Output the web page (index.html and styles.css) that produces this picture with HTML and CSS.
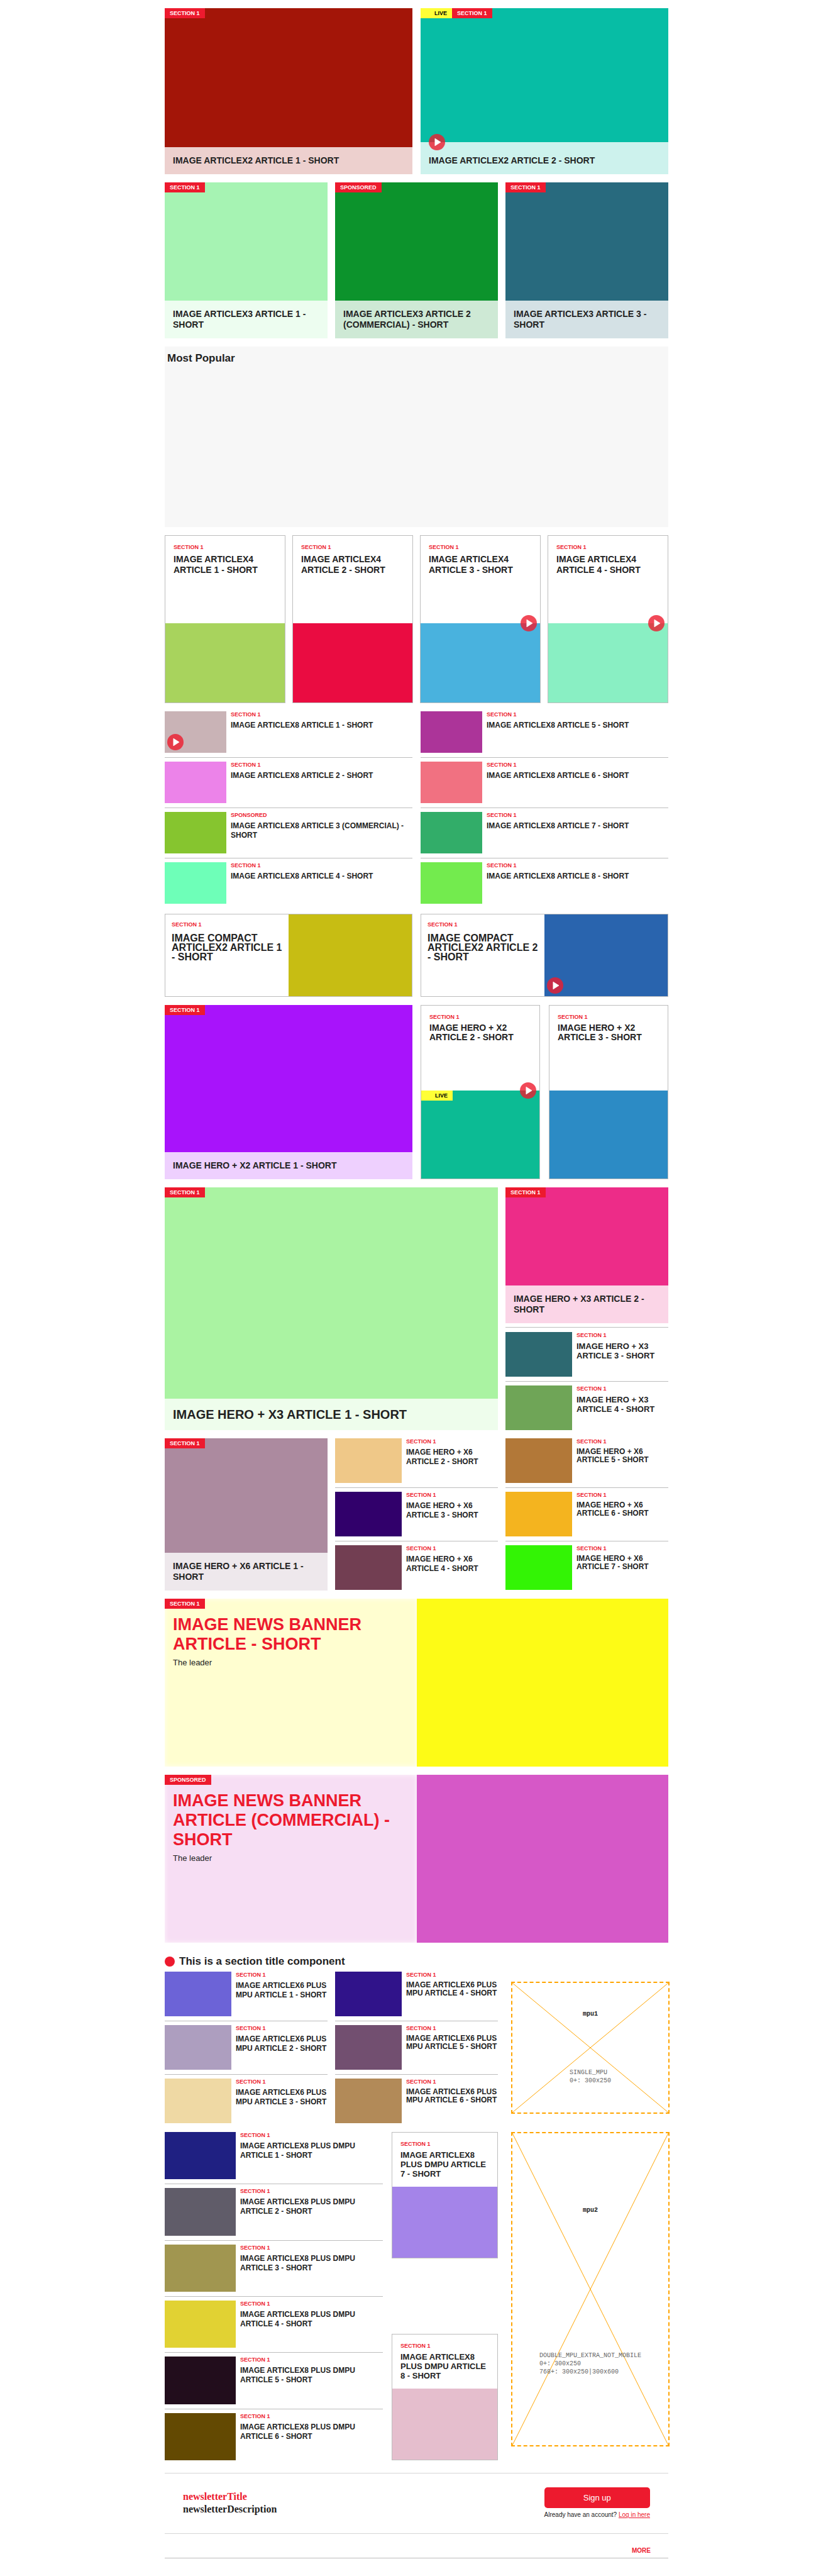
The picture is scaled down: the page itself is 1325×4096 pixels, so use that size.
FILE: index.html
```html
<!DOCTYPE html>
<html lang="en">
<head>
<meta charset="utf-8">
<meta name="viewport" content="width=device-width, initial-scale=1">
<title>Section front</title>
<link rel="stylesheet" href="styles.css">
</head>
<body>
<svg class="sprite" aria-hidden="true">
  <symbol id="play" viewBox="0 0 32 32">
    <circle cx="16" cy="16" r="16" fill="#ed1c2e" fill-opacity=".8"/>
    <path d="M12.2 9v14.2L23.3 16z" fill="#fff" stroke="#fff" stroke-width="1" stroke-linejoin="round"/>
  </symbol>
</svg>
<main class="page">

  <section class="grid cols-2">
    <article class="poster poster-wide t-a1">
      <div class="picture"></div>
      <div class="badges"><span class="badge">SECTION 1</span></div>
      <div class="caption"><h3 class="title">IMAGE ARTICLEX2 ARTICLE 1 - SHORT</h3></div>
    </article>
    <article class="poster poster-wide t-a2">
      <div class="picture"></div>
      <div class="badges"><span class="badge live">LIVE</span><span class="badge">SECTION 1</span></div>
      <div class="caption caption-play"><svg class="play play-caption"><use href="#play"/></svg><h3 class="title">IMAGE ARTICLEX2 ARTICLE 2 - SHORT</h3></div>
    </article>
  </section>

  <section class="grid cols-3">
    <article class="poster poster-third t-b1">
      <div class="picture"></div>
      <div class="badges"><span class="badge">SECTION 1</span></div>
      <div class="caption caption-two"><h3 class="title">IMAGE ARTICLEX3 ARTICLE 1 - SHORT</h3></div>
    </article>
    <article class="poster poster-third t-b2">
      <div class="picture"></div>
      <div class="badges"><span class="badge">SPONSORED</span></div>
      <div class="caption caption-two"><h3 class="title">IMAGE ARTICLEX3 ARTICLE 2 (COMMERCIAL) - SHORT</h3></div>
    </article>
    <article class="poster poster-third t-b3">
      <div class="picture"></div>
      <div class="badges"><span class="badge">SECTION 1</span></div>
      <div class="caption caption-two"><h3 class="title">IMAGE ARTICLEX3 ARTICLE 3 - SHORT</h3></div>
    </article>
  </section>

  <section class="popular"><h2 class="heading">Most Popular</h2></section>

  <section class="grid cols-4">
    <article class="card card-quarter t-c1">
      <div class="card-body"><p class="tag">SECTION 1</p><h3 class="title">IMAGE ARTICLEX4 ARTICLE 1 - SHORT</h3></div>
      <div class="picture"></div>
    </article>
    <article class="card card-quarter t-c2">
      <div class="card-body"><p class="tag">SECTION 1</p><h3 class="title">IMAGE ARTICLEX4 ARTICLE 2 - SHORT</h3></div>
      <div class="picture"></div>
    </article>
    <article class="card card-quarter t-c3">
      <div class="card-body"><p class="tag">SECTION 1</p><h3 class="title">IMAGE ARTICLEX4 ARTICLE 3 - SHORT</h3></div>
      <div class="picture"><svg class="play play-edge"><use href="#play"/></svg></div>
    </article>
    <article class="card card-quarter t-c4">
      <div class="card-body"><p class="tag">SECTION 1</p><h3 class="title">IMAGE ARTICLEX4 ARTICLE 4 - SHORT</h3></div>
      <div class="picture"><svg class="play play-edge"><use href="#play"/></svg></div>
    </article>
  </section>

  <section class="grid cols-2 x8">
    <div class="list list-x8">
      <article class="item t-d1"><div class="picture"><svg class="play play-corner"><use href="#play"/></svg></div><div class="item-body"><p class="tag">SECTION 1</p><h3 class="title">IMAGE ARTICLEX8 ARTICLE 1 - SHORT</h3></div></article>
      <article class="item t-d2"><div class="picture"></div><div class="item-body"><p class="tag">SECTION 1</p><h3 class="title">IMAGE ARTICLEX8 ARTICLE 2 - SHORT</h3></div></article>
      <article class="item t-d3"><div class="picture"></div><div class="item-body"><p class="tag">SPONSORED</p><h3 class="title">IMAGE ARTICLEX8 ARTICLE 3 (COMMERCIAL) - SHORT</h3></div></article>
      <article class="item t-d4"><div class="picture"></div><div class="item-body"><p class="tag">SECTION 1</p><h3 class="title">IMAGE ARTICLEX8 ARTICLE 4 - SHORT</h3></div></article>
    </div>
    <div class="list list-x8">
      <article class="item t-d5"><div class="picture"></div><div class="item-body"><p class="tag">SECTION 1</p><h3 class="title">IMAGE ARTICLEX8 ARTICLE 5 - SHORT</h3></div></article>
      <article class="item t-d6"><div class="picture"></div><div class="item-body"><p class="tag">SECTION 1</p><h3 class="title">IMAGE ARTICLEX8 ARTICLE 6 - SHORT</h3></div></article>
      <article class="item t-d7"><div class="picture"></div><div class="item-body"><p class="tag">SECTION 1</p><h3 class="title">IMAGE ARTICLEX8 ARTICLE 7 - SHORT</h3></div></article>
      <article class="item t-d8"><div class="picture"></div><div class="item-body"><p class="tag">SECTION 1</p><h3 class="title">IMAGE ARTICLEX8 ARTICLE 8 - SHORT</h3></div></article>
    </div>
  </section>

  <section class="grid cols-2">
    <article class="compact t-e1">
      <div class="compact-body"><p class="tag">SECTION 1</p><h3 class="title">IMAGE COMPACT ARTICLEX2 ARTICLE 1 - SHORT</h3></div>
      <div class="picture"></div>
    </article>
    <article class="compact t-e2">
      <div class="compact-body"><p class="tag">SECTION 1</p><h3 class="title">IMAGE COMPACT ARTICLEX2 ARTICLE 2 - SHORT</h3></div>
      <div class="picture"><svg class="play play-corner"><use href="#play"/></svg></div>
    </article>
  </section>

  <section class="grid cols-2">
    <article class="poster t-f1">
      <div class="picture"></div>
      <div class="badges"><span class="badge">SECTION 1</span></div>
      <div class="caption"><h3 class="title">IMAGE HERO + X2 ARTICLE 1 - SHORT</h3></div>
    </article>
    <div class="grid pair">
      <article class="card card-hero t-f2">
        <div class="card-body"><p class="tag">SECTION 1</p><h3 class="title">IMAGE HERO + X2 ARTICLE 2 - SHORT</h3></div>
        <div class="picture"><div class="badges"><span class="badge live">LIVE</span></div><svg class="play play-edge"><use href="#play"/></svg></div>
      </article>
      <article class="card card-hero t-f3">
        <div class="card-body"><p class="tag">SECTION 1</p><h3 class="title">IMAGE HERO + X2 ARTICLE 3 - SHORT</h3></div>
        <div class="picture"></div>
      </article>
    </div>
  </section>

  <section class="grid cols-3">
    <article class="poster poster-hero span-2 t-g1">
      <div class="picture"></div>
      <div class="badges"><span class="badge">SECTION 1</span></div>
      <div class="caption"><h3 class="title">IMAGE HERO + X3 ARTICLE 1 - SHORT</h3></div>
    </article>
    <div class="side">
      <article class="poster poster-side t-g2">
        <div class="picture"></div>
        <div class="badges"><span class="badge">SECTION 1</span></div>
        <div class="caption caption-side"><h3 class="title">IMAGE HERO + X3 ARTICLE 2 - SHORT</h3></div>
      </article>
      <div class="list list-x3">
        <article class="item t-g3"><div class="picture"></div><div class="item-body"><p class="tag">SECTION 1</p><h3 class="title">IMAGE HERO + X3 ARTICLE 3 - SHORT</h3></div></article>
        <article class="item t-g4"><div class="picture"></div><div class="item-body"><p class="tag">SECTION 1</p><h3 class="title">IMAGE HERO + X3 ARTICLE 4 - SHORT</h3></div></article>
      </div>
    </div>
  </section>

  <section class="grid cols-3 x6">
    <article class="poster t-h1">
      <div class="picture"></div>
      <div class="badges"><span class="badge">SECTION 1</span></div>
      <div class="caption caption-two"><h3 class="title">IMAGE HERO + X6 ARTICLE 1 - SHORT</h3></div>
    </article>
    <div class="list">
      <article class="item t-h2"><div class="picture"></div><div class="item-body"><p class="tag">SECTION 1</p><h3 class="title">IMAGE HERO + X6 ARTICLE 2 - SHORT</h3></div></article>
      <article class="item t-h3"><div class="picture"></div><div class="item-body"><p class="tag">SECTION 1</p><h3 class="title">IMAGE HERO + X6 ARTICLE 3 - SHORT</h3></div></article>
      <article class="item t-h4"><div class="picture"></div><div class="item-body"><p class="tag">SECTION 1</p><h3 class="title">IMAGE HERO + X6 ARTICLE 4 - SHORT</h3></div></article>
    </div>
    <div class="list list-tight">
      <article class="item t-h5"><div class="picture"></div><div class="item-body"><p class="tag">SECTION 1</p><h3 class="title">IMAGE HERO + X6 ARTICLE 5 - SHORT</h3></div></article>
      <article class="item t-h6"><div class="picture"></div><div class="item-body"><p class="tag">SECTION 1</p><h3 class="title">IMAGE HERO + X6 ARTICLE 6 - SHORT</h3></div></article>
      <article class="item t-h7"><div class="picture"></div><div class="item-body"><p class="tag">SECTION 1</p><h3 class="title">IMAGE HERO + X6 ARTICLE 7 - SHORT</h3></div></article>
    </div>
  </section>

  <article class="banner t-i1">
    <div class="banner-body"><h2 class="banner-title">IMAGE NEWS BANNER ARTICLE - SHORT</h2><p class="leader">The leader</p></div>
    <div class="picture"></div>
    <div class="badges"><span class="badge">SECTION 1</span></div>
  </article>

  <article class="banner t-i2">
    <div class="banner-body"><h2 class="banner-title">IMAGE NEWS BANNER ARTICLE (COMMERCIAL) - SHORT</h2><p class="leader">The leader</p></div>
    <div class="picture"></div>
    <div class="badges"><span class="badge">SPONSORED</span></div>
  </article>

  <section>
    <h2 class="heading section-title"><span class="dot"></span>This is a section title component</h2>
    <div class="grid cols-3 x6">
      <div class="list">
        <article class="item t-j1"><div class="picture"></div><div class="item-body"><p class="tag">SECTION 1</p><h3 class="title">IMAGE ARTICLEX6 PLUS MPU ARTICLE 1 - SHORT</h3></div></article>
        <article class="item t-j2"><div class="picture"></div><div class="item-body"><p class="tag">SECTION 1</p><h3 class="title">IMAGE ARTICLEX6 PLUS MPU ARTICLE 2 - SHORT</h3></div></article>
        <article class="item t-j3"><div class="picture"></div><div class="item-body"><p class="tag">SECTION 1</p><h3 class="title">IMAGE ARTICLEX6 PLUS MPU ARTICLE 3 - SHORT</h3></div></article>
      </div>
      <div class="list list-tight">
        <article class="item t-j4"><div class="picture"></div><div class="item-body"><p class="tag">SECTION 1</p><h3 class="title">IMAGE ARTICLEX6 PLUS MPU ARTICLE 4 - SHORT</h3></div></article>
        <article class="item t-j5"><div class="picture"></div><div class="item-body"><p class="tag">SECTION 1</p><h3 class="title">IMAGE ARTICLEX6 PLUS MPU ARTICLE 5 - SHORT</h3></div></article>
        <article class="item t-j6"><div class="picture"></div><div class="item-body"><p class="tag">SECTION 1</p><h3 class="title">IMAGE ARTICLEX6 PLUS MPU ARTICLE 6 - SHORT</h3></div></article>
      </div>
      <aside class="mpu mpu-single">
        <svg class="cross" viewBox="0 0 100 100" preserveAspectRatio="none" aria-hidden="true"><path d="M0 0L100 100M100 0L0 100"/></svg>
        <strong class="mpu-name">mpu1</strong>
        <p class="mpu-sizes">SINGLE_MPU<br>0+: 300x250</p>
      </aside>
    </div>
  </section>

  <section class="grid cols-3 dmpu">
    <div class="grid dmpu-main span-2">
      <div class="list list-dmpu">
        <article class="item t-k1"><div class="picture"></div><div class="item-body"><p class="tag">SECTION 1</p><h3 class="title">IMAGE ARTICLEX8 PLUS DMPU ARTICLE 1 - SHORT</h3></div></article>
        <article class="item t-k2"><div class="picture"></div><div class="item-body"><p class="tag">SECTION 1</p><h3 class="title">IMAGE ARTICLEX8 PLUS DMPU ARTICLE 2 - SHORT</h3></div></article>
        <article class="item t-k3"><div class="picture"></div><div class="item-body"><p class="tag">SECTION 1</p><h3 class="title">IMAGE ARTICLEX8 PLUS DMPU ARTICLE 3 - SHORT</h3></div></article>
        <article class="item t-k4"><div class="picture"></div><div class="item-body"><p class="tag">SECTION 1</p><h3 class="title">IMAGE ARTICLEX8 PLUS DMPU ARTICLE 4 - SHORT</h3></div></article>
        <article class="item t-k5"><div class="picture"></div><div class="item-body"><p class="tag">SECTION 1</p><h3 class="title">IMAGE ARTICLEX8 PLUS DMPU ARTICLE 5 - SHORT</h3></div></article>
        <article class="item t-k6"><div class="picture"></div><div class="item-body"><p class="tag">SECTION 1</p><h3 class="title">IMAGE ARTICLEX8 PLUS DMPU ARTICLE 6 - SHORT</h3></div></article>
      </div>
      <div class="stack">
        <article class="card card-dmpu t-k7">
          <div class="card-body"><p class="tag">SECTION 1</p><h3 class="title">IMAGE ARTICLEX8 PLUS DMPU ARTICLE 7 - SHORT</h3></div>
          <div class="picture"></div>
        </article>
        <article class="card card-dmpu t-k8">
          <div class="card-body"><p class="tag">SECTION 1</p><h3 class="title">IMAGE ARTICLEX8 PLUS DMPU ARTICLE 8 - SHORT</h3></div>
          <div class="picture"></div>
        </article>
      </div>
    </div>
    <aside class="mpu mpu-double">
      <svg class="cross" viewBox="0 0 100 100" preserveAspectRatio="none" aria-hidden="true"><path d="M0 0L100 100M100 0L0 100"/></svg>
      <strong class="mpu-name">mpu2</strong>
      <p class="mpu-sizes">DOUBLE_MPU_EXTRA_NOT_MOBILE<br>0+: 300x250<br>768+: 300x250|300x600</p>
    </aside>
  </section>

  <footer class="footer">
    <section class="newsletter">
      <div>
        <h2 class="newsletter-title">newsletterTitle</h2>
        <p class="newsletter-text">newsletterDescription</p>
      </div>
      <div class="signup">
        <button class="signup-button" type="button">Sign up</button>
        <p class="signup-note">Already have an account? <a class="login" href="#">Log in here</a></p>
      </div>
    </section>
    <div class="more-bar"><a class="more" href="#">MORE</a></div>
  </footer>
</main>
</body>
</html>
```
FILE: styles.css
```css
:root {
  --red: #ed1a2e;
  --ink: #222;
  --line: #bdbdbd;
}

* { box-sizing: border-box; }

body {
  margin: 0;
  background: #fff;
  color: var(--ink);
  font-family: "Liberation Sans", Arial, sans-serif;
}

h2, h3, p { margin: 0; }

.sprite { display: none; }

.page {
  display: flex;
  flex-direction: column;
  gap: 13px;
  max-width: 801px;
  margin: 0 auto;
  padding: 13px 0 27px;
}

/* Grids */
.grid { display: grid; gap: 13px; }
.cols-2 { grid-template-columns: repeat(2, minmax(0, 1fr)); }
.cols-3 { grid-template-columns: repeat(3, minmax(0, 1fr)); gap: 12px; }
.cols-4 { grid-template-columns: repeat(4, minmax(0, 1fr)); gap: 11px; }
.pair { grid-template-columns: repeat(2, minmax(0, 1fr)); gap: 14px; }
.span-2 { grid-column: span 2; }

/* Shared parts */
.picture { position: relative; background: var(--tone); }

.title { font-size: 14px; line-height: 17px; font-weight: 700; }

.tag {
  color: var(--red);
  font-size: 9px;
  line-height: 10px;
  font-weight: 700;
}

.badges { position: absolute; top: 0; left: 0; display: flex; }

.badge {
  padding: 0 8px;
  background: var(--red);
  color: #fff;
  font-size: 9px;
  line-height: 16px;
  font-weight: 700;
}

.live { padding-left: 22px; background: #ffff37; color: #000; }

.play { position: absolute; width: 26px; height: 26px; }
.play-caption { top: -13px; left: 13px; }
.play-edge { top: -13px; right: 5px; }
.play-corner { bottom: 4px; left: 4px; }

.heading { font-size: 17px; line-height: 20px; font-weight: 700; }

/* Picture with a caption band below */
.poster { position: relative; display: flex; flex-direction: column; }
.poster .picture { flex: 1; }
.poster-wide { min-height: 264px; }
.poster-third { min-height: 248px; }
.poster-hero { min-height: 386px; }
.poster-side { min-height: 216px; }

.caption {
  position: relative;
  display: flex;
  align-items: center;
  min-height: 43px;
  padding: 0 13px;
  background: color-mix(in srgb, var(--tone) 20%, #fff);
}

.caption-play { min-height: 51px; padding-top: 7px; }
.caption-two { min-height: 60px; }
.caption-side { min-height: 60px; }
.poster-hero .caption { min-height: 50px; }
.poster-hero .title { font-size: 20px; line-height: 24px; }

/* Most popular */
.popular { min-height: 287px; padding: 9px 4px; background: #f7f7f7; }

/* Outlined card, text above the picture */
.card { display: flex; flex-direction: column; border: 1px solid var(--line); }
.card-body { flex: 1; padding: 13px; }
.card .title { margin-top: 5px; }
.card-quarter { min-height: 267px; }
.card-quarter .title { margin-top: 6px; }
.card-quarter .picture { height: 126px; }
.card-hero { min-height: 277px; }
.card-hero .title { line-height: 15px; }
.card-hero .picture { height: 140px; }
.card-dmpu { min-height: 201px; }
.card-dmpu .title { font-size: 13px; line-height: 15px; }
.card-dmpu .picture { height: 113px; }

/* Thumbnail lists */
.item { display: flex; gap: 7px; }
.item .picture { flex: none; width: 106px; height: 71px; }
.item-body { min-width: 0; }
.item .title { margin-top: 5px; font-size: 12px; line-height: 15px; }

.item:not(:last-child) {
  margin-bottom: 6px;
  padding-bottom: 7px;
  border-bottom: 1px solid var(--line);
}

.x8 { padding-bottom: 3px; }
.list-x8 .picture { width: 98px; height: 66px; }
.list-tight .title { line-height: 13px; }
.list-x3 { padding-top: 7px; border-top: 1px solid var(--line); }
.item-body { flex: 1; }
.list-x3 .title { font-size: 13px; }
.side { display: flex; flex-direction: column; justify-content: space-between; }
.x6 { min-height: 242px; }

.list-dmpu .picture { width: 113px; height: auto; aspect-ratio: 3 / 2; }

/* Compact card, picture on the right half */
.compact {
  display: grid;
  grid-template-columns: repeat(2, minmax(0, 1fr));
  min-height: 132px;
  border: 1px solid var(--line);
}

.compact-body { padding: 11px 10px; }
.compact .title { margin-top: 9px; font-size: 16px; line-height: 15px; }

/* News banner */
.banner {
  position: relative;
  display: grid;
  grid-template-columns: repeat(2, minmax(0, 1fr));
  min-height: 267px;
}

.banner-body {
  padding: 26px 13px;
  background: color-mix(in srgb, var(--tone) 20%, #fff);
  box-shadow: inset 0 0 9px rgba(255, 255, 255, .8);
}

.banner-title { color: var(--red); font-size: 27px; line-height: 31px; font-weight: 700; }
.leader { margin-top: 5px; font-size: 13px; line-height: 18px; }

/* Section title */
.section-title { display: flex; align-items: center; gap: 7px; height: 33px; }
.dot { width: 16px; height: 16px; border-radius: 50%; background: var(--red); }

/* Advert placeholders */
.mpu {
  position: relative;
  display: grid;
  grid-template-rows: repeat(2, minmax(0, 1fr));
  place-items: center;
  justify-self: end;
  width: 252px;
  margin-right: -2px;
  padding-bottom: 8px;
  border: 2px dashed orange;
  font-family: "Liberation Mono", "Courier New", monospace;
  font-size: 10px;
}

.mpu-single { align-self: center; height: 210px; }
.mpu-double { align-self: start; height: 500px; }
.mpu-name, .mpu-sizes { position: relative; line-height: 13px; }
.mpu-sizes { color: #666; }

.cross { position: absolute; inset: 0; width: 100%; height: 100%; }
.cross path { fill: none; stroke: orange; stroke-width: 1px; vector-effect: non-scaling-stroke; }

.dmpu-main { grid-template-columns: minmax(0, 1fr) 169px; gap: 14px; }
.stack { display: flex; flex-direction: column; justify-content: space-between; }

/* Footer */
.footer { margin-top: 7px; }

.newsletter {
  display: flex;
  align-items: center;
  justify-content: space-between;
  min-height: 97px;
  padding: 0 29px;
  border: solid #d6d6d6;
  border-width: 1px 0;
}

.newsletter-title,
.newsletter-text {
  font: 700 16px/20px "Liberation Serif", "Times New Roman", serif;
}

.newsletter-title { color: var(--red); }

.signup-button {
  display: block;
  width: 100%;
  height: 33px;
  padding: 0;
  border: 0;
  border-radius: 5px;
  background: var(--red);
  color: #fff;
  font: 400 13px/16px "Liberation Sans", Arial, sans-serif;
}

.signup-note { margin-top: 4px; font-size: 10px; line-height: 13px; }
.login { color: var(--red); }

.more-bar {
  padding: 20px 28px 5px;
  border-bottom: 1px solid var(--line);
  text-align: right;
}

.more {
  display: block;
  color: var(--red);
  font-size: 10px;
  line-height: 13px;
  font-weight: 700;
  text-decoration: none;
}

/* Picture tones */
.t-a1 { --tone: #a31508; }
.t-a2 { --tone: #07bda5; }
.t-b1 { --tone: #a6f3b3; }
.t-b2 { --tone: #0c932c; }
.t-b3 { --tone: #286a7e; }
.t-c1 { --tone: #a8d35d; }
.t-c2 { --tone: #ea0c41; }
.t-c3 { --tone: #49b2de; }
.t-c4 { --tone: #89efc3; }
.t-d1 { --tone: #c9b3b6; }
.t-d2 { --tone: #ec83e9; }
.t-d3 { --tone: #86c52f; }
.t-d4 { --tone: #6effb8; }
.t-d5 { --tone: #ac3499; }
.t-d6 { --tone: #f17181; }
.t-d7 { --tone: #32ad69; }
.t-d8 { --tone: #73eb4e; }
.t-e1 { --tone: #c7bd13; }
.t-e2 { --tone: #2964ae; }
.t-f1 { --tone: #a813fb; }
.t-f2 { --tone: #0cbb94; }
.t-f3 { --tone: #2c8bc5; }
.t-g1 { --tone: #aaf3a2; }
.t-g2 { --tone: #ed2c88; }
.t-g3 { --tone: #2d6971; }
.t-g4 { --tone: #6fa557; }
.t-h1 { --tone: #ac8a9f; }
.t-h2 { --tone: #efc888; }
.t-h3 { --tone: #31006b; }
.t-h4 { --tone: #723e52; }
.t-h5 { --tone: #b27838; }
.t-h6 { --tone: #f4b41f; }
.t-h7 { --tone: #33f405; }
.t-i1 { --tone: #fdfb16; }
.t-i2 { --tone: #d658c7; }
.t-j1 { --tone: #6c63d7; }
.t-j2 { --tone: #ad9ebf; }
.t-j3 { --tone: #efd9a4; }
.t-j4 { --tone: #30138a; }
.t-j5 { --tone: #724f70; }
.t-j6 { --tone: #b28a58; }
.t-k1 { --tone: #1f2082; }
.t-k2 { --tone: #605c69; }
.t-k3 { --tone: #a19650; }
.t-k4 { --tone: #e1d233; }
.t-k5 { --tone: #220d1c; }
.t-k6 { --tone: #634902; }
.t-k7 { --tone: #a484e9; }
.t-k8 { --tone: #e5becd; }
```
